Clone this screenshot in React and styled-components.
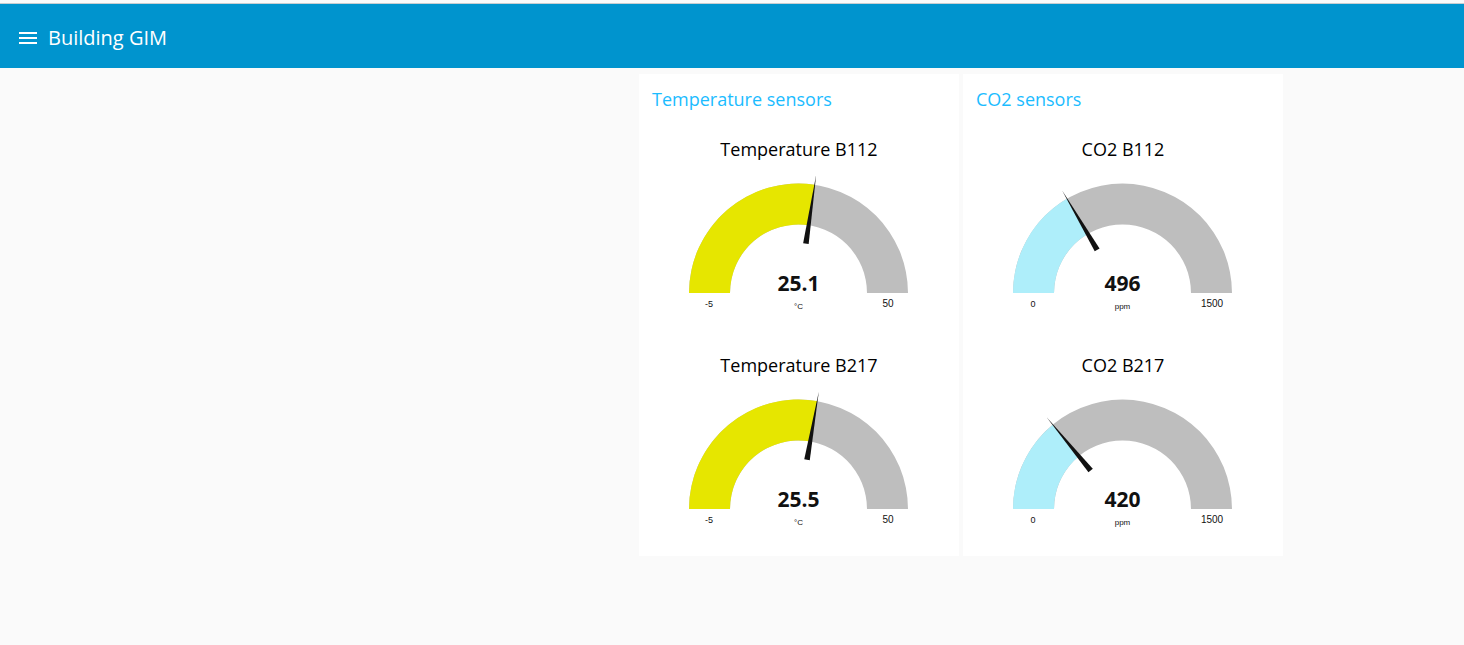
import React from "react";
import styled, { createGlobalStyle } from "styled-components";

const GlobalStyle = createGlobalStyle`
  * { box-sizing: border-box; }
  body {
    margin: 0;
    background: #fafafa;
    color: #111;
    font-family: "Open Sans", "Noto Sans", sans-serif;
  }
`;

const TopEdge = styled.div`
  height: 4px;
  border-bottom: 1px solid #c6cdd1;
  background: #fafafa;
`;

const Header = styled.header`
  display: flex;
  align-items: center;
  gap: 8px;
  height: 64px;
  padding: 4px 16px 0;
  background: #0094ce;
  color: #fff;
`;

const MenuButton = styled.button`
  display: flex;
  width: 24px;
  height: 24px;
  padding: 0;
  border: 0;
  background: none;
  color: inherit;
  cursor: pointer;
`;

const PageTitle = styled.h1`
  margin: 0;
  font-size: 20px;
  line-height: 24px;
  font-weight: 400;
`;

const Board = styled.main`
  display: flex;
  justify-content: center;
  align-items: flex-start;
  gap: 4px;
  padding: 6px 0 6px 458px;
`;

const Card = styled.section`
  flex: 0 0 320px;
  background: #fff;
`;

const CardTitle = styled.h2`
  margin: 0;
  padding: 13px;
  color: #1bbcff;
  font-size: 18px;
  line-height: 24px;
  font-weight: 400;
`;

const GaugeBox = styled.figure`
  display: flex;
  flex-direction: column;
  align-items: center;
  gap: 5px;
  margin: 0;
  padding: 13px 0 24px;
`;

const GaugeTitle = styled.figcaption`
  color: #000;
  font-size: 18px;
  line-height: 24px;
`;

const Dial = styled.svg`
  display: block;
  width: 300px;
  height: 150px;
`;

const Value = styled.text`
  fill: #111;
  font-size: 21px;
  font-weight: 700;
  text-anchor: middle;
`;

const Label = styled.text`
  fill: #111;
  font-family: "Liberation Sans", Arial, sans-serif;
  font-size: ${(p) => p.$size}px;
  text-anchor: middle;
`;

const CX = 149.5;
const CY = 127;
const OUTER = 109.5;
const INNER = 68.5;

const point = (radius, fraction) => {
  const a = Math.PI * (1 - fraction);
  return `${CX + radius * Math.cos(a)} ${CY - radius * Math.sin(a)}`;
};

const arc = (fraction) =>
  `M${point(OUTER, 0)} A${OUTER} ${OUTER} 0 0 1 ${point(OUTER, fraction)} ` +
  `L${point(INNER, fraction)} A${INNER} ${INNER} 0 0 0 ${point(INNER, 0)} Z`;

function Gauge({ title, value, min, max, unit, color }) {
  const fraction = (value - min) / (max - min);
  return (
    <GaugeBox>
      <GaugeTitle>{title}</GaugeTitle>
      <Dial viewBox="0 0 300 150" role="img" aria-label={`${title}: ${value} ${unit}`}>
        <path d={arc(1)} fill="#bebebe" />
        <path d={arc(fraction)} fill={color} />
        <path
          d={`M${CX - 119} ${CY} L${CX - 50} ${CY - 2.8} V${CY + 2.8} Z`}
          transform={`rotate(${fraction * 180} ${CX} ${CY})`}
          fill="#111"
        />
        <Value x={CX} y="125">{value}</Value>
        <Label x={CX} y="143" $size={8}>{unit}</Label>
        <Label x="60" y="141" $size={9}>{min}</Label>
        <Label x="239" y="141" $size={10}>{max}</Label>
      </Dial>
    </GaugeBox>
  );
}

const groups = [
  {
    title: "Temperature sensors",
    scale: { min: -5, max: 50, unit: "°C", color: "#e6e600" },
    sensors: [
      { title: "Temperature B112", value: 25.1 },
      { title: "Temperature B217", value: 25.5 },
    ],
  },
  {
    title: "CO2 sensors",
    scale: { min: 0, max: 1500, unit: "ppm", color: "#aeeefa" },
    sensors: [
      { title: "CO2 B112", value: 496 },
      { title: "CO2 B217", value: 420 },
    ],
  },
];

export default function App() {
  return (
    <>
      <GlobalStyle />
      <TopEdge />
      <Header>
        <MenuButton type="button" aria-label="Menu">
          <svg width="24" height="24" viewBox="0 0 24 24" fill="currentColor" aria-hidden="true">
            <path d="M3 18h18v-2H3v2zm0-5h18v-2H3v2zm0-7v2h18V6H3z" />
          </svg>
        </MenuButton>
        <PageTitle>Building GIM</PageTitle>
      </Header>
      <Board>
        {groups.map((group) => (
          <Card key={group.title}>
            <CardTitle>{group.title}</CardTitle>
            {group.sensors.map((sensor) => (
              <Gauge key={sensor.title} {...group.scale} {...sensor} />
            ))}
          </Card>
        ))}
      </Board>
    </>
  );
}
